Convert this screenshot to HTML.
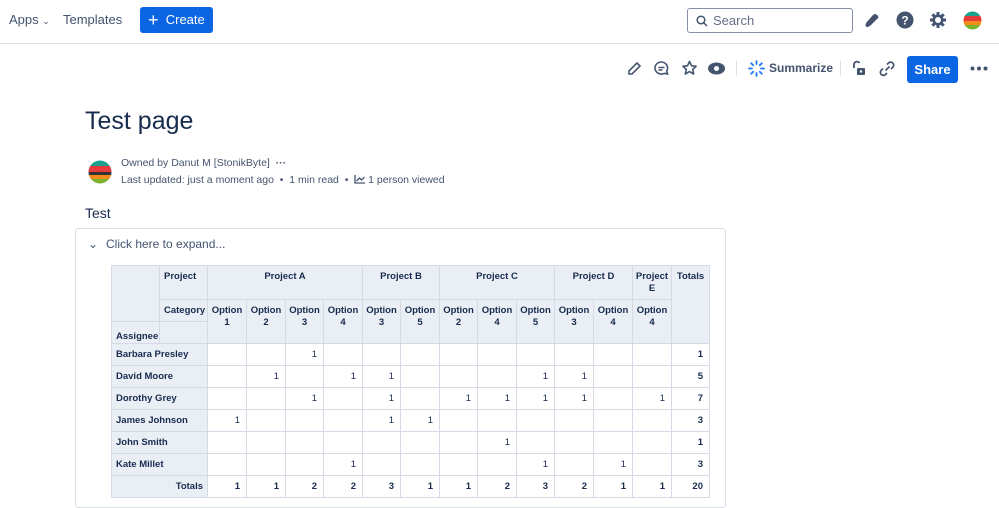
<!DOCTYPE html>
<html><head><meta charset="utf-8"><style>
*{box-sizing:border-box;margin:0;padding:0}
body{width:999px;height:497px;overflow:hidden;background:#fff;font-family:"Liberation Sans",sans-serif;color:#172b4d;position:relative}
.a{position:absolute}
.nav{font-size:13px;color:#44546f}
.btn{background:#0c66e4;color:#fff;border-radius:3px;font-size:13px}
.g{position:absolute;left:111px;top:265px;display:grid;grid-template-columns:47px 47px 38px 38px 37px 38px 37px 38px 37px 38px 37px 38px 38px 38px 37px;grid-template-rows:33px 21px 21px repeat(7,21px);gap:1px;background:#d4dbe6;border:1px solid #d4dbe6;font-size:9.5px;font-weight:bold;color:#172b4d}
.g div{background:#fff;text-align:right;padding:5px 6px 0 0;white-space:nowrap;overflow:hidden}
.g div.h{background:#eaeef5;text-align:center;padding:5px 2px 0;white-space:normal;line-height:12px}
.g div.n{background:#eaeef5;text-align:left;padding-left:4px}
.g div.v{font-weight:normal}
</style></head><body>
<div class="a nav" style="left:9px;top:12px">Apps <span style="font-size:9px">&#8964;</span></div>
<div class="a nav" style="left:63px;top:12px">Templates</div>
<div class="a btn" style="left:140px;top:7px;width:73px;height:26px;line-height:26px;padding-left:8px"><span style="font-size:18px;vertical-align:-2px">+</span>&nbsp; Create</div>
<div class="a" style="left:687px;top:8px;width:166px;height:25px;border:1px solid #8590a2;border-radius:3px;font-size:13px;color:#626f86;line-height:23px;padding-left:25px">Search
<svg class="a" style="left:8px;top:6px" width="12" height="12"><circle cx="5" cy="5" r="3.8" stroke="#44546f" stroke-width="1.5" fill="none"/><path d="M8 8l3 3" stroke="#44546f" stroke-width="1.5"/></svg></div>
<svg class="a" style="left:864px;top:12px" width="16" height="16"><path d="M2 11 L9 3 Q11 1 13 3 L14 4 Q15 6 13 7 L6 14 Z" fill="#44546f"/><circle cx="3.5" cy="13" r="2" fill="#44546f"/></svg>
<svg class="a" style="left:896px;top:11px" width="18" height="18"><circle cx="9" cy="9" r="8.5" fill="#44546f"/><text x="9" y="13.5" font-size="12" font-weight="bold" text-anchor="middle" fill="#fff" font-family="Liberation Sans">?</text></svg>
<svg class="a" style="left:929px;top:11px" width="18" height="18"><g fill="#44546f"><rect x="7.5" y="1" width="3" height="16"/><rect x="1" y="7.5" width="16" height="3"/><rect x="7.5" y="1" width="3" height="16" transform="rotate(45 9 9)"/><rect x="7.5" y="1" width="3" height="16" transform="rotate(-45 9 9)"/></g><circle cx="9" cy="9" r="5.5" fill="#44546f"/><circle cx="9" cy="9" r="3" fill="#fff"/></svg>
<svg class="a" style="left:963px;top:11px" width="19" height="19"><defs><clipPath id="c1"><circle cx="9.5" cy="9.5" r="9"/></clipPath></defs><g clip-path="url(#c1)"><rect width="19" height="5" fill="#1fa08e"/><rect y="5" width="19" height="5" fill="#e83a3a"/><rect y="10" width="19" height="4" fill="#f28c1c"/><rect y="14" width="19" height="5" fill="#7ab32e"/></g></svg>
<div class="a" style="left:0;top:43px;width:999px;height:1px;background:#dcdfe4"></div>
<svg class="a" style="left:626px;top:61px" width="16" height="16"><path d="M3 13 L3 10 L11 2 L14 5 L6 13 Z" fill="none" stroke="#44546f" stroke-width="1.6"/></svg>
<svg class="a" style="left:653px;top:60px" width="17" height="17"><path d="M8.5 2a6.5 6 0 1 0 3 11.3 L14.5 14 L13.7 11A6.5 6 0 0 0 8.5 2Z" fill="none" stroke="#44546f" stroke-width="1.6"/><path d="M5.5 7.5h6M5.5 10h4" stroke="#44546f" stroke-width="1.4"/></svg>
<svg class="a" style="left:681px;top:60px" width="17" height="17"><path d="M8.5 1.5l2 4.3 4.6.5-3.4 3.1 1 4.6-4.2-2.4-4.2 2.4 1-4.6L1.9 6.3l4.6-.5z" fill="none" stroke="#44546f" stroke-width="1.6" stroke-linejoin="round"/></svg>
<svg class="a" style="left:707px;top:61px" width="19" height="15"><ellipse cx="9.5" cy="7.5" rx="8.5" ry="6" fill="#44546f"/><circle cx="9.5" cy="7.5" r="2.5" fill="#fff"/></svg>
<div class="a" style="left:736px;top:61px;width:1px;height:15px;background:#dcdfe4"></div>
<svg class="a" style="left:748px;top:60px" width="17" height="17" stroke="#1d7afc" stroke-width="1.8" stroke-linecap="round"><path d="M8.5 1v3M8.5 13v3M1 8.5h3M13 8.5h3M3.2 3.2l2 2M11.8 11.8l2 2M13.8 3.2l-2 2M5.2 11.8l-2 2"/></svg>
<div class="a" style="left:769px;top:61px;font-size:12px;font-weight:bold;color:#44546f">Summarize</div>
<div class="a" style="left:840px;top:61px;width:1px;height:15px;background:#dcdfe4"></div>
<svg class="a" style="left:851px;top:60px" width="16" height="17"><path d="M3 8V4.5a3 3 0 0 1 5.5-1.5" fill="none" stroke="#44546f" stroke-width="1.8"/><rect x="6" y="8" width="8" height="7" rx="1" fill="#44546f"/><circle cx="10" cy="11.5" r="1.2" fill="#fff"/></svg>
<svg class="a" style="left:878px;top:60px" width="18" height="17" fill="none" stroke="#44546f" stroke-width="1.7"><path d="M7.5 10.5l4-4M9 4.5l1.5-1.5a3 3 0 0 1 4.3 4.3L13 9M5 8.5L3.3 10.2a3 3 0 0 0 4.3 4.3L9 13"/></svg>
<div class="a btn" style="left:907px;top:56px;width:51px;height:27px;line-height:27px;text-align:center;font-weight:bold">Share</div>
<svg class="a" style="left:970px;top:66px" width="18" height="5" fill="#44546f"><circle cx="2.5" cy="2.5" r="2"/><circle cx="9" cy="2.5" r="2"/><circle cx="15.5" cy="2.5" r="2"/></svg>
<div class="a" style="left:85px;top:107px;font-size:25px;color:#172b4d">Test page</div>
<svg class="a" style="left:88px;top:160px" width="24" height="24"><defs><clipPath id="c2"><circle cx="12" cy="12" r="11.5"/></clipPath></defs><g clip-path="url(#c2)"><rect width="24" height="6" fill="#1fa08e"/><rect y="6" width="24" height="6" fill="#e83a3a"/><rect y="12" width="24" height="3" fill="#333"/><rect y="15" width="24" height="4" fill="#f28c1c"/><rect y="19" width="24" height="5" fill="#7ab32e"/></g></svg>
<div class="a" style="left:121px;top:157px;font-size:10.5px;color:#44546f">Owned by Danut M [StonikByte] &nbsp;<b>···</b></div>
<div class="a" style="left:121px;top:174px;font-size:10.5px;color:#44546f">Last updated: just a moment ago &nbsp;•&nbsp; 1 min read &nbsp;•&nbsp; <svg width="11" height="9" style="vertical-align:-1px"><path d="M1 0v8h10M2.5 6l3-3 2 2 3-3" fill="none" stroke="#44546f" stroke-width="1.3"/></svg> 1 person viewed</div>
<div class="a" style="left:85px;top:205px;font-size:14px">Test</div>
<div class="a" style="left:75px;top:228px;width:651px;height:280px;border:1px solid #dcdfe4;border-radius:3px"></div>
<div class="a" style="left:88px;top:237px;font-size:12px;color:#44546f">&#8964;</div>
<div class="a" style="left:106px;top:237px;font-size:12px;color:#44546f">Click here to expand...</div>
<div class="g">
<div class="h" style="grid-area:1/1/3/2"></div>
<div class="h" style="grid-area:1/2/2/3;text-align:left;padding-left:4px">Project</div>
<div class="h" style="grid-area:1/3/2/7">Project A</div>
<div class="h" style="grid-area:1/7/2/9">Project B</div>
<div class="h" style="grid-area:1/9/2/12">Project C</div>
<div class="h" style="grid-area:1/12/2/14">Project D</div>
<div class="h" style="grid-area:1/14/2/15">Project E</div>
<div class="h" style="grid-area:1/15/4/16">Totals</div>
<div class="h" style="grid-area:2/2/3/3;text-align:left;padding-left:4px">Category</div>
<div class="h" style="grid-area:2/3/4/4">Option 1</div>
<div class="h" style="grid-area:2/4/4/5">Option 2</div>
<div class="h" style="grid-area:2/5/4/6">Option 3</div>
<div class="h" style="grid-area:2/6/4/7">Option 4</div>
<div class="h" style="grid-area:2/7/4/8">Option 3</div>
<div class="h" style="grid-area:2/8/4/9">Option 5</div>
<div class="h" style="grid-area:2/9/4/10">Option 2</div>
<div class="h" style="grid-area:2/10/4/11">Option 4</div>
<div class="h" style="grid-area:2/11/4/12">Option 5</div>
<div class="h" style="grid-area:2/12/4/13">Option 3</div>
<div class="h" style="grid-area:2/13/4/14">Option 4</div>
<div class="h" style="grid-area:2/14/4/15">Option 4</div>
<div class="h" style="grid-area:3/1/4/2;text-align:left;padding:9px 0 0 4px">Assignee</div>
<div class="h" style="grid-area:3/2/4/3"></div>

<div class="n" style="grid-area:4/1/5/3">Barbara Presley</div>
<div style="grid-area:4/5/5/6" class="v">1</div>
<div style="grid-area:4/15/5/16">1</div>

<div class="n" style="grid-area:5/1/6/3">David Moore</div>
<div style="grid-area:5/4/6/5" class="v">1</div>
<div style="grid-area:5/6/6/7" class="v">1</div>
<div style="grid-area:5/7/6/8" class="v">1</div>
<div style="grid-area:5/11/6/12" class="v">1</div>
<div style="grid-area:5/12/6/13" class="v">1</div>
<div style="grid-area:5/15/6/16">5</div>

<div class="n" style="grid-area:6/1/7/3">Dorothy Grey</div>
<div style="grid-area:6/5/7/6" class="v">1</div>
<div style="grid-area:6/7/7/8" class="v">1</div>
<div style="grid-area:6/9/7/10" class="v">1</div>
<div style="grid-area:6/10/7/11" class="v">1</div>
<div style="grid-area:6/11/7/12" class="v">1</div>
<div style="grid-area:6/12/7/13" class="v">1</div>
<div style="grid-area:6/14/7/15" class="v">1</div>
<div style="grid-area:6/15/7/16">7</div>

<div class="n" style="grid-area:7/1/8/3">James Johnson</div>
<div style="grid-area:7/3/8/4" class="v">1</div>
<div style="grid-area:7/7/8/8" class="v">1</div>
<div style="grid-area:7/8/8/9" class="v">1</div>
<div style="grid-area:7/15/8/16">3</div>

<div class="n" style="grid-area:8/1/9/3">John Smith</div>
<div style="grid-area:8/10/9/11" class="v">1</div>
<div style="grid-area:8/15/9/16">1</div>

<div class="n" style="grid-area:9/1/10/3">Kate Millet</div>
<div style="grid-area:9/6/10/7" class="v">1</div>
<div style="grid-area:9/11/10/12" class="v">1</div>
<div style="grid-area:9/13/10/14" class="v">1</div>
<div style="grid-area:9/15/10/16">3</div>

<div class="n" style="grid-area:10/1/11/3;text-align:right;padding-right:4px">Totals</div>
<div style="grid-area:10/3">1</div><div style="grid-area:10/4">1</div><div style="grid-area:10/5">2</div><div style="grid-area:10/6">2</div><div style="grid-area:10/7">3</div><div style="grid-area:10/8">1</div><div style="grid-area:10/9">1</div><div style="grid-area:10/10">2</div><div style="grid-area:10/11">3</div><div style="grid-area:10/12">2</div><div style="grid-area:10/13">1</div><div style="grid-area:10/14">1</div><div style="grid-area:10/15">20</div>

<div></div><div></div><div></div><div></div><div></div><div></div><div></div><div></div><div></div><div></div>
<div></div><div></div><div></div><div></div><div></div><div></div><div></div><div></div><div></div><div></div>
<div></div><div></div><div></div><div></div><div></div><div></div><div></div><div></div><div></div><div></div>
<div></div><div></div><div></div><div></div><div></div><div></div><div></div><div></div><div></div><div></div>
<div></div><div></div><div></div><div></div><div></div><div></div><div></div><div></div><div></div><div></div>
<div></div><div></div>
</div>
</body></html>
